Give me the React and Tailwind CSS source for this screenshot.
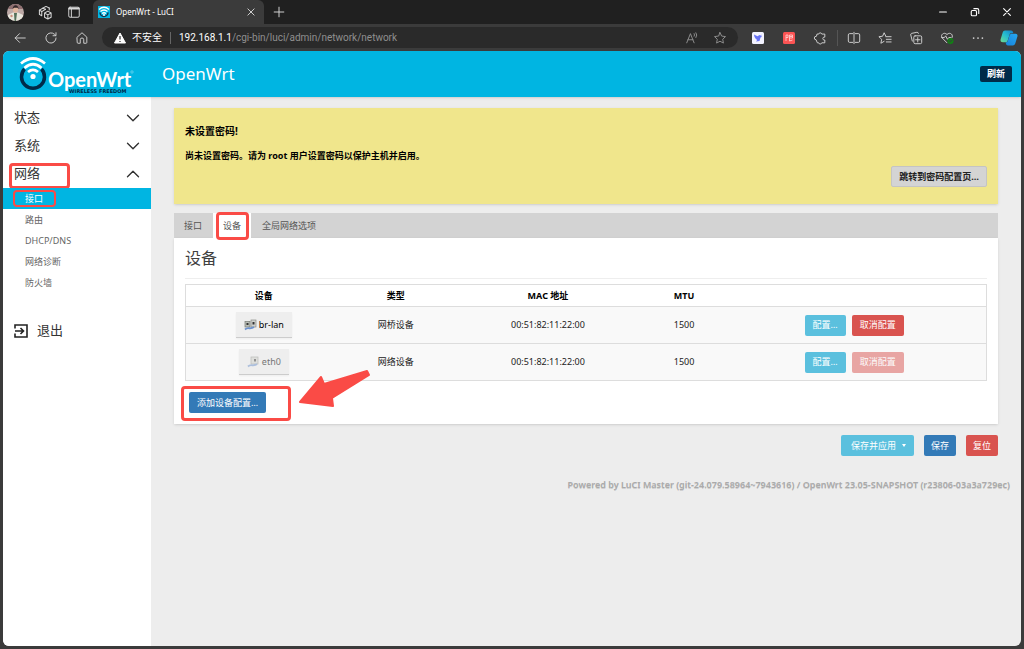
import { ChevronDown, ChevronUp } from "lucide-react";

const menu = [
  { name: "状态", open: false },
  { name: "系统", open: false },
  { name: "网络", open: true, marked: true },
];

const submenu = ["接口", "路由", "DHCP/DNS", "网络诊断", "防火墙"];

const devices = [
  { name: "br-lan", type: "网桥设备", mac: "00:51:82:11:22:00", mtu: 1500, bridge: true },
  { name: "eth0", type: "网络设备", mac: "00:51:82:11:22:00", mtu: 1500, bridge: false },
];

const btn = "h-[21px] rounded-[2px] text-[9px] text-white whitespace-nowrap";

function Icon({ size = 14, className = "", children }) {
  return (
    <svg
      width={size}
      height={size}
      viewBox="0 0 16 16"
      fill="none"
      stroke="currentColor"
      strokeWidth="1.1"
      strokeLinecap="round"
      strokeLinejoin="round"
      className={"shrink-0 " + className}
    >
      {children}
    </svg>
  );
}

function IconButton({ label, children, className = "" }) {
  return (
    <button aria-label={label} className={"flex w-4 h-4 shrink-0 items-center justify-center " + className}>
      {children}
    </button>
  );
}

/* --- Red highlight around a control --- */
function Mark({ className }) {
  return <span className={"absolute pointer-events-none border-[#fa4b46] " + className} />;
}

function TitleBar() {
  return (
    <div className="flex h-6 items-center bg-[#202020] text-[#d6d6d6]">
      <div className="flex items-center gap-[13px] pl-[7px]">
        <button aria-label="Profile" className="h-[17px] w-[17px]">
          <svg width="17" height="17" viewBox="0 0 17 17">
            <defs>
              <clipPath id="face">
                <circle cx="8.5" cy="8.5" r="8.5" />
              </clipPath>
            </defs>
            <g clipPath="url(#face)">
              <rect width="17" height="17" fill="#bda9a6" />
              <rect width="17" height="5" fill="#8f6f70" />
              <path d="M1 17V11l5-2.500h5l5 2.500v6z" fill="#e8e6dc" />
              <path d="M7 9h3l-1 8H7.500z" fill="#54705a" />
              <ellipse cx="8.500" cy="5.500" rx="2.600" ry="3.300" fill="#dfb49d" />
              <path d="M5.700 5c0-5 5.800-5 5.800 0l-1-1.300H7z" fill="#33272a" />
              <circle cx="4.500" cy="12" r="1.200" fill="#cc8f7c" />
            </g>
          </svg>
        </button>
        <IconButton label="Workspaces">
          <Icon size={15}>
            <path d="M1.500 10V5.500l3.500-2M1.500 10L4 11.500M4 11.500V7l4-2.500" />
            <path d="M1.500 5.500L4 7M5 3.500l3.500-2L12 3.200M5 3.500l3 1" />
            <path d="M7 9.500V13l3.500 2 3.500-2V8.500L10.500 6.500 7 8.500zM7 8.700l3.500 1.800L14 8.500M10.500 10.500V15" />
            <path d="M12 3.200v2" />
          </Icon>
        </IconButton>
        <IconButton label="Tab actions">
          <Icon size={14}>
            <rect x="2" y="2.500" width="12" height="11.500" rx="1.500" />
            <path d="M2.500 4h11" strokeWidth="2.200" />
            <path d="M5 5v8.500" />
          </Icon>
        </IconButton>
      </div>

      <div className="ml-[11px] flex h-6 w-[171px] items-center rounded-t-md bg-[#3b3b3b] px-[5px]">
        <svg width="12" height="12" viewBox="0 0 24 24" className="shrink-0">
          <rect width="24" height="24" fill="#00b5e2" />
          <path d="M4 9a8 8 0 1 0 16 0" transform="translate(0 4)" fill="none" stroke="#16324b" strokeWidth="3" />
          <path d="M2 7q10-9 20 0M5 11q7-6 14 0M8 15q4-3 8 0" fill="none" stroke="#fff" strokeWidth="2.500" />
          <circle cx="12" cy="18" r="2" fill="#fff" />
        </svg>
        <span className="ml-[6px] flex-1 text-[8px] text-white">OpenWrt - LuCI</span>
        <IconButton label="Close tab">
          <Icon size={10}>
            <path d="M3 3l10 10M13 3L3 13" strokeWidth="1.500" />
          </Icon>
        </IconButton>
      </div>
      <IconButton label="New tab" className="ml-[7px]">
        <Icon size={14}>
          <path d="M8 2.500v11M2.500 8h11" />
        </Icon>
      </IconButton>

      <div className="ml-auto flex gap-4 pr-[9px] text-white">
        <IconButton label="Minimize">
          <Icon size={12}><path d="M3.500 8h9" strokeWidth="1.600" /></Icon>
        </IconButton>
        <IconButton label="Restore">
          <Icon size={12}>
            <rect x="3" y="6" width="7" height="7" rx="1.500" strokeWidth="1.500" />
            <path d="M6.500 3.500h4.500a2 2 0 0 1 2 2V10" strokeWidth="1.500" />
          </Icon>
        </IconButton>
        <IconButton label="Close window">
          <Icon size={12}><path d="M3.500 3.500l9 9M12.500 3.500l-9 9" strokeWidth="1.500" /></Icon>
        </IconButton>
      </div>
    </div>
  );
}

function AddressBar() {
  return (
    <div className="flex h-[27px] items-center bg-[#3b3b3b] text-[#d0d0d0]">
      <div className="flex items-center gap-[15px] pl-3">
        <IconButton label="Back">
          <Icon><path d="M14 8H2.500M7.500 3L2.500 8l5 5" /></Icon>
        </IconButton>
        <IconButton label="Reload">
          <Icon><path d="M13.800 8A5.800 5.800 0 1 1 12 3.800l1.500 1.400M13.700 2v3.400h-3.400" /></Icon>
        </IconButton>
        <IconButton label="Home">
          <Icon><path d="M2.500 7L8 2l5.500 5v6.200a.8.8 0 0 1-.8.8H10v-4a2 2 0 0 0-4 0v4H3.300a.8.8 0 0 1-.8-.8z" /></Icon>
        </IconButton>
      </div>

      <div className="ml-3 flex h-[21px] flex-1 items-center rounded-full bg-[#2a2a2a] pl-3 pr-[10px]">
        <svg width="12" height="12" viewBox="0 0 12 12" className="shrink-0">
          <path d="M6 1L11.500 11H.5z" fill="#fff" stroke="#fff" strokeLinejoin="round" />
          <path d="M6 4v3.500M6 9v1" stroke="#2a2a2a" strokeWidth="1.200" />
        </svg>
        <span className="ml-[6px] text-[10px] text-white">不安全</span>
        <span className="mx-2 h-3 w-px bg-[#666]" />
        <span className="flex-1 whitespace-nowrap font-[Roboto,sans-serif] text-[10px] text-[#8f8f8f]">
          <span className="text-white">192.168.1.1</span>/cgi-bin/luci/admin/network/network
        </span>
        <div className="flex gap-3 text-[#8f8f8f]">
          <IconButton label="Read aloud">
            <Icon>
              <path d="M2 13.500L6.200 3l4.200 10.500M3.400 10h5.600M10.500 3q1 1.500 0 3M12.500 2q2 2.500 0 5.500" />
            </Icon>
          </IconButton>
          <IconButton label="Favorite">
            <Icon><path d="M8 1.800l1.900 4 4.400.6-3.200 3 .8 4.400L8 11.700l-3.900 2.100.8-4.400-3.200-3 4.400-.6z" /></Icon>
          </IconButton>
        </div>
      </div>

      <div className="ml-3 flex items-center gap-[15px]">
        <IconButton label="Bird extension">
          <svg width="12" height="12" viewBox="0 0 12 12">
            <rect width="12" height="12" rx="1.500" fill="#f3f3ff" />
            <path d="M2 2.500l3.500 1.700L7.500 3l1 .5L10 2.500 9 4l1 .8-1.500.7L7.500 9 4 9.500 5.200 8C3.500 7 2 5 2 2.500z" fill="#6873f5" />
          </svg>
        </IconButton>
        <IconButton label="Red extension">
          <svg width="12" height="12" viewBox="0 0 12 12">
            <rect width="12" height="12" rx="1.500" fill="#fb5454" />
            <path d="M3 3v6M3 3h2v2.500H3M6.500 3h3v3h-3zM6.500 6v3l3-1M7 4.500h2" fill="none" stroke="#ffd8d8" strokeWidth=".8" />
          </svg>
        </IconButton>
        <IconButton label="Extensions">
          <Icon>
            <path d="M5 3.500h1.500a1.800 1.800 0 0 1 3.500 0h3.500V7h-1a1.700 1.700 0 0 0 0 3.300h1v3.200H10a1.800 1.800 0 0 1-3.500 0H5L3.500 10a2 2 0 0 1 0-4z" />
          </Icon>
        </IconButton>
      </div>
      <div className="ml-[9px] flex items-center gap-[15px] pr-[7px]">
        <div className="flex items-center border-l border-[#555] pl-2">
          <IconButton label="Split screen">
            <Icon><path d="M6.500 3H3a1.500 1.500 0 0 0-1.500 1.500v7A1.500 1.500 0 0 0 3 13h3.500M9.500 3H13a1.500 1.500 0 0 1 1.500 1.500v7A1.500 1.500 0 0 1 13 13H9.500M8 1.500v13" /></Icon>
          </IconButton>
        </div>
        <IconButton label="Favorites list">
          <Icon><path d="M9 6L7 2 5.200 6l-4.200.5L4.200 9.500 3.300 14 7 11.800M9 6.500h6M9.500 9.500H15M9.500 12.500H15" /></Icon>
        </IconButton>
        <IconButton label="Collections">
          <Icon>
            <rect x="5.500" y="5.500" width="9" height="9" rx="1.500" />
            <path d="M10 7.500v5M7.500 10h5M3.800 11.500L2 4.500a1.500 1.500 0 0 1 1-1.800l6-1.200a1.500 1.500 0 0 1 1.800 1.200" />
          </Icon>
        </IconButton>
        <IconButton label="Browser essentials">
          <Icon>
            <path d="M8 13.500L2.500 8C0 4.500 4.500.5 8 4c3.500-3.500 8 .5 5.500 4M2 7.500h3l1.500-2 2 4 1.500-2h2" />
            <circle cx="12" cy="11.500" r="3.500" fill="#137d17" stroke="none" />
            <path d="M10.500 11.500l1 1 2-2" stroke="#3b3b3b" />
          </Icon>
        </IconButton>
        <IconButton label="More">
          <Icon>
            <path d="M3 8h.01M8 8h.01M13 8h.01" strokeWidth="2" />
          </Icon>
        </IconButton>
        <IconButton label="Copilot">
          <svg width="18" height="18" viewBox="0 0 18 18" className="shrink-0">
            <defs>
              <linearGradient id="cpa" x1="0" y1="1" x2="1" y2="0">
                <stop offset="0" stopColor="#6fdc8c" />
                <stop offset=".5" stopColor="#25bdd0" />
                <stop offset="1" stopColor="#157cc9" />
              </linearGradient>
              <linearGradient id="cpb" x1="0" y1="1" x2="1" y2="0">
                <stop offset="0" stopColor="#1683dd" />
                <stop offset="1" stopColor="#27a8f0" />
              </linearGradient>
            </defs>
            <path d="M5 1.500h6c1.500 0 2 1 2.300 2.500L10 4.500 7.500 12C7 13 6.500 13.300 5.500 13.300H3c-2 0-3-1.300-2.300-3.300l2-6.500C3 2.300 4 1.500 5 1.500z" fill="url(#cpa)" />
            <path d="M13 4.700h2.500c1.700 0 2.300 1.300 1.900 2.800l-2 6.500c-.4 1.500-1.200 2.500-2.700 2.500H8c-1.500 0-2-1-2.300-3.200 1.200 0 1.700-.4 2-1.300l2-6c.4-1 1-1.300 3.300-1.300z" fill="url(#cpb)" />
          </svg>
        </IconButton>
      </div>
    </div>
  );
}

function Logo() {
  return (
    <svg width="120" height="42" viewBox="0 0 120 42" className="shrink-0" aria-label="OpenWrt">
      <path d="M6.500 16A11.500 11.500 0 1 0 23.500 16" fill="none" stroke="#002b49" strokeWidth="3.500" />
      <g fill="none" stroke="#fff" strokeWidth="2.800">
        <path d="M3 10.500Q15 .5 27 10.500" />
        <path d="M6.500 15Q15 7.500 23.500 15" />
        <path d="M10 19Q15 14.800 20 19" />
      </g>
      <circle cx="15" cy="23.500" r="2.600" fill="#fff" />
      <text x="30" y="34" fontSize="20" fontWeight="700" fill="#fff" fontFamily="Lato, sans-serif">OpenWrt</text>
      <text x="51" y="40" fontSize="5" fontWeight="700" fill="#002b49" fontFamily="DejaVu Sans, sans-serif">WIRELESS FREEDOM</text>
      <circle cx="114" cy="19" r="1.200" fill="none" stroke="#8cdcf2" strokeWidth=".6" />
    </svg>
  );
}

function Sidebar() {
  return (
    <nav className="w-[148px] shrink-0 bg-white pt-[7px] text-[#333]">
      <ul>
        {menu.map((item) => (
          <li key={item.name} className="relative">
            <a href="#" className="flex h-[28px] items-center justify-between pl-[11px] pr-[7px] text-[13px]">
              {item.name}
              {item.open ? <ChevronUp size={22} strokeWidth={1.5} /> : <ChevronDown size={22} strokeWidth={1.5} />}
            </a>
            {item.marked && <Mark className="left-[6px] top-[3px] h-[26px] w-[61px] rounded-[4px] border-[3px]" />}
          </li>
        ))}
      </ul>
      <ul className="text-[9px] text-[#666]">
        {submenu.map((name, i) => (
          <li key={name} className="relative">
            <a
              href="#"
              className={"flex h-[21px] items-center pl-[22px] " + (i === 0 ? "bg-[#00b5e2] text-white" : "")}
            >
              {name}
            </a>
            {i === 0 && <Mark className="left-[10px] top-[2px] h-[17px] w-[43px] rounded-[4px] border-2" />}
          </li>
        ))}
      </ul>
      <a href="#" className="mt-6 flex h-[28px] items-center gap-2 pl-[10px] text-[13px]">
        <svg width="16" height="16" viewBox="0 0 16 16" fill="none" stroke="#222" strokeWidth="1.600">
          <path d="M2 5.500V2h12v12H2v-3.500M2 8h8M7.500 5l3 3-3 3" />
        </svg>
        退出
      </a>
    </nav>
  );
}

function DeviceIcon({ bridge }) {
  return (
    <svg width="13" height="12" viewBox="0 0 13 12" className={bridge ? "" : "opacity-50"}>
      {bridge && (
        <g>
          <rect x="1" y="2.500" width="5" height="5.500" fill="#b9bdb5" stroke="#777b74" strokeWidth=".7" />
          <rect x="2.500" y="4" width="2" height="2" fill="#333" />
        </g>
      )}
      <rect x={bridge ? 7 : 4} y="1" width={bridge ? 5 : 7} height="7" fill="#cfd1cc" stroke="#898c86" strokeWidth=".7" />
      <rect x={bridge ? 8.5 : 7} y="3" width="2" height="2.500" fill="#333" />
      <path d="M1 10.500c3-3 5 .5 9-2.500" fill="none" stroke="#6d92cc" strokeWidth="1.800" />
    </svg>
  );
}

function DeviceTable() {
  return (
    <table className="mt-[5px] w-full table-fixed border-collapse border border-[#ddd] text-center text-[9px] text-[#222]">
      <colgroup>
        <col className="w-[19.5%]" />
        <col className="w-[13.5%]" />
        <col className="w-[24.5%]" />
        <col className="w-[9.5%]" />
        <col className="w-[33%]" />
      </colgroup>
      <thead className="text-black">
        <tr className="h-[22px]">
          <th>设备</th>
          <th>类型</th>
          <th>MAC 地址</th>
          <th>MTU</th>
          <th></th>
        </tr>
      </thead>
      <tbody>
        {devices.map((dev) => (
          <tr key={dev.name} className="h-[37px] border-t border-[#ddd] bg-[#f9f9f9]">
            <td>
              <span
                className={
                  "inline-flex h-[26px] items-center gap-[2px] border-b border-[#ccc] bg-[#eee] px-2 align-middle shadow-xs " +
                  (dev.bridge ? "text-black" : "text-[#777]")
                }
              >
                <DeviceIcon bridge={dev.bridge} />
                {dev.name}
              </span>
            </td>
            <td>{dev.type}</td>
            <td>{dev.mac}</td>
            <td>{dev.mtu}</td>
            <td>
              <div className="flex justify-center gap-[6px]">
                <button className={btn + " bg-[#5bc0de] px-2"}>配置…</button>
                <button disabled={!dev.bridge} className={btn + " bg-[#d9534f] px-2 disabled:opacity-50"}>
                  取消配置
                </button>
              </div>
            </td>
          </tr>
        ))}
      </tbody>
    </table>
  );
}

export default function App() {
  return (
    <div className="flex min-h-screen flex-col bg-[#3b3b3b] font-['Noto_Sans','Noto_Sans_CJK_SC',sans-serif]">
      <TitleBar />
      <AddressBar />

      <div className="mx-[3px] mb-[3px] flex flex-1 flex-col overflow-hidden rounded-md bg-[#ededed]">
        <header className="relative flex h-[46px] shrink-0 items-center bg-[#00b5e2] pl-[15px] pr-[9px] shadow">
          <Logo />
          <a href="#" className="ml-6 text-[17px] text-white">OpenWrt</a>
          <button className="ml-auto h-4 rounded-[2px] bg-[#002b49] px-[7px] text-[9px] leading-4 font-bold text-white">
            刷新
          </button>
        </header>

        <div className="flex flex-1">
          <Sidebar />

          <main className="flex-1 pt-[11px]">
            <div className="mx-[23px]">
              {/* --- Password warning --- */}
              <div className="flex h-[96px] flex-col bg-[#f0e68c] px-[11px] pt-4 font-bold text-black shadow">
                <h4 className="text-[10px] leading-[14px]">未设置密码!</h4>
                <p className="mt-[11px] text-[9px] leading-[14px]">
                  尚未设置密码。请为 root 用户设置密码以保护主机并启用。
                </p>
                <button className="mt-[3px] h-[21px] self-end rounded-[2px] border border-[#c4c4c4] bg-[#d4d4d4] px-[7px] text-[9px] font-bold text-[#222]">
                  跳转到密码配置页…
                </button>
              </div>

              <ul className="mt-[9px] flex h-[25px] gap-px bg-[#d3d3d3] text-[9px] text-[#555]">
                <li className="flex">
                  <a href="#" className="flex items-center px-[10px]">接口</a>
                </li>
                <li className="relative flex bg-white">
                  <a href="#" className="flex items-center px-[10px]">设备</a>
                  <Mark className="-top-px left-[3px] h-[28px] w-[33px] rounded-[4px] border-[3px]" />
                </li>
                <li className="flex">
                  <a href="#" className="flex items-center px-[10px]">全局网络选项</a>
                </li>
              </ul>

              <section className="bg-white px-[11px] pb-[11px] shadow">
                <h3 className="flex h-[41px] items-center border-b border-[#eee] text-[16px] text-[#404040]">设备</h3>
                <DeviceTable />
                <div className="relative mt-[11px] flex px-1">
                  <button className={btn + " bg-[#337ab7] px-2"}>添加设备配置…</button>
                  <Mark className="-left-1 -top-[6px] h-[35px] w-[110px] rounded-[4px] border-[3px]" />
                  <svg
                    width="74"
                    height="40"
                    viewBox="0 0 74 40"
                    className="pointer-events-none absolute -top-6 left-[113px]"
                  >
                    <path
                      d="M2 34L23 9l3 7 43-13 2 4-37 23 1 8z"
                      fill="#fa4b46"
                      stroke="#fa4b46"
                      strokeWidth="2"
                      strokeLinejoin="round"
                    />
                  </svg>
                </div>
              </section>

              <div className="mt-[11px] flex justify-end gap-[10px]">
                <button className={btn + " flex items-center gap-[6px] bg-[#5bc0de] pl-[10px] pr-2"}>
                  保存并应用
                  <span className="h-0 w-0 border-x-2 border-t-[3px] border-x-transparent border-t-white" />
                </button>
                <button className={btn + " bg-[#337ab7] px-[7px]"}>保存</button>
                <button className={btn + " bg-[#d9534f] px-[7px]"}>复位</button>
              </div>
            </div>

            <footer className="mt-[22px] pr-[11px] text-right text-[9px] leading-[14px] font-semibold text-[#aaa] text-shadow-2xs">
              <a href="#">Powered by LuCI Master (git-24.079.58964~7943616)</a> / OpenWrt 23.05-SNAPSHOT
              (r23806-03a3a729ec)
            </footer>
          </main>
        </div>
      </div>
    </div>
  );
}
